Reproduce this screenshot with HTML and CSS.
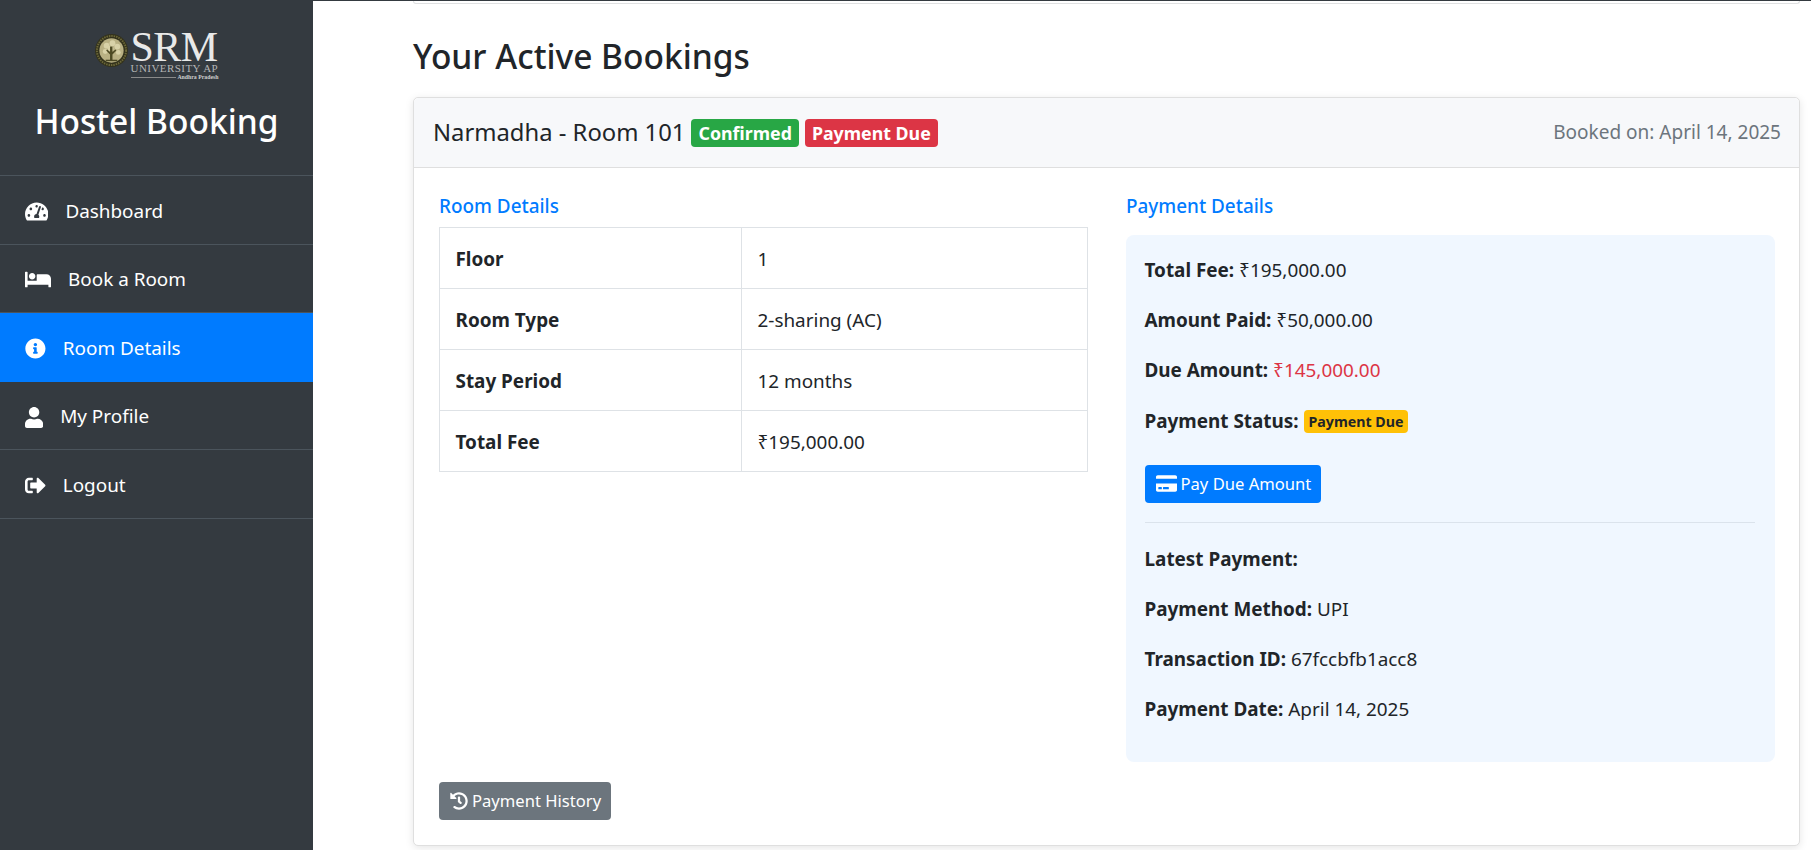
FILE: index.html
```html
<!DOCTYPE html>
<html lang="en">
<head>
<meta charset="utf-8">
<title>Room Details - Hostel Booking</title>
<link rel="stylesheet" href="styles.css">
</head>
<body>
<div class="page">
  <aside class="sidebar">
    <div class="brand">
      <div class="logo">
        <svg class="emblem" viewBox="0 0 34 34" aria-hidden="true">
          <circle cx="17" cy="17" r="17" fill="#33321c"/>
          <circle cx="17" cy="17" r="15" fill="none" stroke="#6b6738" stroke-width="2" stroke-dasharray="1.500 1"/>
          <circle cx="17" cy="17" r="12.500" fill="#b9b184"/>
          <g fill="#d8d2a8">
            <circle cx="12" cy="12" r="3"/><circle cx="18" cy="9.500" r="3"/><circle cx="23" cy="13" r="3"/>
            <circle cx="10.500" cy="18" r="2.500"/><circle cx="24" cy="19" r="2.500"/><circle cx="16" cy="15" r="3"/>
          </g>
          <path d="M15.500 27v-6l-4-4 1-1 3 2.500V13h2.500v5.500l3-2.500 1 1-4 4v6z" fill="#4d4a24"/>
          <path d="M11 26.500h12V28H11z" fill="#4d4a24"/>
        </svg>
        <div class="logo-text">
          <div class="logo-srm">SRM</div>
          <div class="logo-uni">UNIVERSITY AP</div>
          <div class="logo-state"><span class="logo-rule"></span>Andhra Pradesh</div>
        </div>
      </div>
      <h1 class="brand-title">Hostel Booking</h1>
    </div>
    <nav class="menu">
      <a class="menu-item">
        <svg class="ico ico-tach" viewBox="0 0 576 512"><path d="M288 32C128.94 32 0 160.94 0 320c0 52.8 14.25 102.26 39.06 144.8 5.61 9.62 16.3 15.2 27.44 15.2h443c11.14 0 21.83-5.58 27.44-15.2C561.75 422.26 576 372.8 576 320c0-159.06-128.94-288-288-288zm0 64c14.71 0 26.58 10.13 30.32 23.65-1.11 2.26-2.64 4.23-3.45 6.67l-9.22 27.67c-5.13 3.49-10.97 6.01-17.64 6.01-17.67 0-32-14.33-32-32S270.33 96 288 96zM96 384c-17.67 0-32-14.33-32-32s14.33-32 32-32 32 14.33 32 32-14.33 32-32 32zm48-160c-17.67 0-32-14.33-32-32s14.33-32 32-32 32 14.33 32 32-14.33 32-32 32zm246.77-72.41l-61.33 184C343.13 347.33 352 364.54 352 384c0 11.72-3.38 22.55-8.88 32H232.88c-5.5-9.45-8.88-20.28-8.88-32 0-33.94 26.5-61.43 59.9-63.59l61.34-184.01c4.17-12.56 17.73-19.45 30.36-15.17 12.57 4.19 19.35 17.79 15.17 30.36zm14.66 57.2l15.52-46.55c3.47-1.29 7.13-2.23 11.05-2.23 17.67 0 32 14.33 32 32s-14.33 32-32 32c-11.38-.01-20.89-6.28-26.57-15.22zM480 384c-17.67 0-32-14.33-32-32s14.33-32 32-32 32 14.33 32 32-14.33 32-32 32z"/></svg>
        <span>Dashboard</span>
      </a>
      <a class="menu-item">
        <svg class="ico ico-bed" viewBox="0 0 640 512"><path d="M176 256c44.11 0 80-35.89 80-80s-35.89-80-80-80-80 35.89-80 80 35.89 80 80 80zm352-128H304c-8.84 0-16 7.16-16 16v144H64V80c0-8.84-7.16-16-16-16H16C7.16 64 0 71.16 0 80v352c0 8.84 7.160 16 16 16h32c8.840 0 16-7.160 16-16v-48h512v48c0 8.840 7.160 16 16 16h32c8.840 0 16-7.160 16-16V240c0-61.860-50.140-112-112-112z"/></svg>
        <span>Book a Room</span>
      </a>
      <a class="menu-item active">
        <svg class="ico ico-std" viewBox="0 0 512 512"><path d="M256 8C119.043 8 8 119.083 8 256c0 136.997 111.043 248 248 248s248-111.003 248-248C504 119.083 392.957 8 256 8zm0 110c23.196 0 42 18.804 42 42s-18.804 42-42 42-42-18.804-42-42 18.804-42 42-42zm56 254c0 6.627-5.373 12-12 12h-88c-6.627 0-12-5.373-12-12v-24c0-6.627 5.373-12 12-12h12v-64h-12c-6.627 0-12-5.373-12-12v-24c0-6.627 5.373-12 12-12h64c6.627 0 12 5.373 12 12v100h12c6.627 0 12 5.373 12 12v24z"/></svg>
        <span>Room Details</span>
      </a>
      <a class="menu-item">
        <svg class="ico ico-user" viewBox="0 0 448 512"><path d="M224 256c70.7 0 128-57.3 128-128S294.7 0 224 0 96 57.3 96 128s57.3 128 128 128zm89.6 32h-16.7c-22.2 10.2-46.9 16-72.9 16s-50.6-5.8-72.9-16h-16.7C60.2 288 0 348.2 0 422.4V464c0 26.5 21.5 48 48 48h352c26.5 0 48-21.5 48-48v-41.6c0-74.2-60.2-134.4-134.4-134.4z"/></svg>
        <span>My Profile</span>
      </a>
      <a class="menu-item">
        <svg class="ico ico-std" viewBox="0 0 512 512"><path d="M497 273L329 441c-15 15-41 4.5-41-17v-96H152c-13.3 0-24-10.7-24-24v-96c0-13.3 10.7-24 24-24h136V88c0-21.4 25.9-32 41-17l168 168c9.3 9.4 9.3 24.6 0 34zM192 436v-40c0-6.6-5.4-12-12-12H96c-17.7 0-32-14.3-32-32V160c0-17.7 14.3-32 32-32h84c6.6 0 12-5.4 12-12V76c0-6.6-5.400-12-12-12H96c-53 0-96 43-96 96v192c0 53 43 96 96 96h84c6.600 0 12-5.400 12-12z"/></svg>
        <span>Logout</span>
      </a>
    </nav>
  </aside>

  <main class="main">
    <div class="prev-card"></div>
    <h2 class="page-title">Your Active Bookings</h2>
    <section class="card">
      <header class="card-head">
        <div class="card-title">
          <span>Narmadha - Room 101</span>
          <span class="badge badge-green">Confirmed</span>
          <span class="badge badge-red">Payment Due</span>
        </div>
        <span class="booked">Booked on: April 14, 2025</span>
      </header>
      <div class="card-body">
        <div class="columns">
          <div class="col">
            <h3 class="section-title">Room Details</h3>
            <table class="details">
              <tr><th>Floor</th><td>1</td></tr>
              <tr><th>Room Type</th><td>2-sharing (AC)</td></tr>
              <tr><th>Stay Period</th><td>12 months</td></tr>
              <tr><th>Total Fee</th><td>₹195,000.00</td></tr>
            </table>
          </div>
          <div class="col">
            <h3 class="section-title">Payment Details</h3>
            <div class="pay-box">
              <p><strong>Total Fee:</strong> ₹195,000.00</p>
              <p><strong>Amount Paid:</strong> ₹50,000.00</p>
              <p><strong>Due Amount:</strong> <span class="due">₹145,000.00</span></p>
              <p><strong>Payment Status:</strong> <span class="badge-small">Payment Due</span></p>
              <a class="btn btn-blue">
                <svg class="btn-ico-card" viewBox="0 0 576 512"><path d="M0 432c0 26.500 21.500 48 48 48h480c26.500 0 48-21.500 48-48V256H0v176zm192-68c0-6.600 5.400-12 12-12h136c6.600 0 12 5.400 12 12v40c0 6.600-5.400 12-12 12H204c-6.600 0-12-5.400-12-12v-40zm-128 0c0-6.600 5.400-12 12-12h72c6.600 0 12 5.400 12 12v40c0 6.600-5.400 12-12 12H76c-6.600 0-12-5.400-12-12v-40zM576 80v48H0V80c0-26.500 21.500-48 48-48h480c26.500 0 48 21.500 48 48z"/></svg>
                Pay Due Amount
              </a>
              <hr class="divider">
              <p><strong>Latest Payment:</strong></p>
              <p><strong>Payment Method:</strong> UPI</p>
              <p><strong>Transaction ID:</strong> 67fccbfb1acc8</p>
              <p class="last"><strong>Payment Date:</strong> April 14, 2025</p>
            </div>
          </div>
        </div>
        <a class="btn btn-grey">
          <svg class="btn-ico-hist" viewBox="0 0 512 512"><path d="M504 255.531c.253 136.640-111.180 248.372-247.820 248.468-59.015.042-113.223-20.530-155.822-54.911-11.077-8.940-11.905-25.541-1.839-35.607l11.267-11.267c8.609-8.609 22.353-9.551 31.891-1.984C173.062 425.135 212.781 440 256 440c101.705 0 184-82.311 184-184 0-101.705-82.311-184-184-184-48.814 0-93.149 18.969-126.068 49.932l50.754 50.754c10.080 10.080 2.941 27.314-11.313 27.314H24c-8.837 0-16-7.163-16-16V38.627c0-14.254 17.234-21.393 27.314-11.314l49.372 49.372C129.209 34.136 189.552 8 256 8c136.810 0 247.747 110.780 248 247.531zm-180.912 78.784l9.823-12.630c8.138-10.463 6.253-25.542-4.210-33.679L288 256.349V152c0-13.255-10.745-24-24-24h-16c-13.255 0-24 10.745-24 24v135.651l65.409 50.874c10.463 8.137 25.541 6.253 33.679-4.210z"/></svg>
          Payment History
        </a>
      </div>
    </section>
  </main>
</div>
</body>
</html>
```

FILE: styles.css
```css
* { box-sizing: border-box; }
html, body { margin: 0; height: 100%; overflow: hidden; }
body {
  font-family: "Noto Sans", "Open Sans", sans-serif;
  font-size: 18.9px;
  line-height: 27.6px;
  color: #212529;
  background: #fff;
}
.page { display: flex; height: 850px; border-top: 1px solid #343a40; }

/* sidebar */
.sidebar { width: 313px; flex: none; background: #343a40; color: #fff; margin-top: -1px; }
.brand {
  height: 176px;
  padding-top: 32px;
  border-bottom: 1px solid #4b545c;
  display: flex;
  flex-direction: column;
  align-items: center;
}
.logo { display: flex; align-items: flex-start; gap: 3px; height: 51px; }
.emblem { width: 33px; height: 33px; margin-top: 2px; }
.logo-text { font-family: "Liberation Serif", serif; color: #e9e9e9; width: 88px; }
.logo-srm { font-size: 42px; line-height: 30px; height: 31px; letter-spacing: -.5px; white-space: nowrap; }
.logo-uni { font-size: 11px; line-height: 10px; letter-spacing: .45px; color: #b5b5b5; white-space: nowrap; }
.logo-state { font-size: 5.800px; line-height: 9px; font-weight: bold; color: #cfcfcf; display: flex; align-items: center; justify-content: flex-end; white-space: nowrap; }
.logo-rule { flex: 1; height: 1px; background: #8a8a8a; margin-right: 1px; }
.brand-title { margin: 14px 0 0; font-size: 33.500px; line-height: 48px; font-weight: 500; white-space: nowrap; }

.menu-item {
  display: flex;
  align-items: center;
  height: 68.6px;
  padding: 3px 0 0 25px;
  border-bottom: 1px solid #4b545c;
  color: #fff;
}
.menu-item.active { background: #007bff; border-bottom-color: #007bff; }
.ico { fill: #fff; height: 21px; margin-right: 17px; flex: none; }
.ico-tach { width: 23.400px; }
.ico-bed { width: 26px; }
.ico-std { width: 20.800px; }
.ico-user { width: 18.200px; }

/* main */
.main { flex: 1; min-width: 0; padding: 0 11px 0 100px; }
.prev-card { height: 3px; border: 1px solid #dfe0e1; border-top: 0; border-radius: 0 0 4px 4px; }
.page-title { margin: 31px 0 20px; font-size: 33.500px; line-height: 42px; font-weight: 500; }

.card {
  border: 1px solid #dfdfdf;
  border-radius: 5px;
  background: #fff;
  box-shadow: 0 2px 8px rgba(0, 0, 0, .1);
  height: 749px;
}
.card-head {
  height: 70px;
  padding: 0 18px 0 19px;
  display: flex;
  align-items: center;
  justify-content: space-between;
  background: #f7f8fa;
  border-bottom: 1px solid #dfdfdf;
  border-radius: 5px 5px 0 0;
}
.card-title { display: flex; align-items: center; font-size: 23.800px; gap: 6px; }
.badge {
  display: inline-block;
  padding: 0 7px;
  height: 28px;
  line-height: 28px;
  font-size: 17.800px;
  font-weight: 700;
  color: #fff;
  border-radius: 4px;
}
.badge-green { background: #28a745; }
.badge-red { background: #dc3545; }
.booked { color: #6c757d; font-size: 19px; }

.card-body { padding: 25px; }
.columns { display: grid; grid-template-columns: 649px 649px; column-gap: 38px; }
.section-title { margin: 0 0 7px; font-size: 18.900px; line-height: 27px; font-weight: 500; color: #007bff; }
.details { width: 649px; border-collapse: collapse; }
.details th, .details td { border: 1px solid #dee2e6; padding: 18px 15.500px 14.400px; text-align: left; }
.details th { width: 302px; font-weight: 700; }

.pay-box { background: #f0f7ff; border-radius: 8px; padding: 22px 20px 21px 18.500px; height: 527px; margin-top: 15px; }
.pay-box p { margin: 0 0 22.600px; white-space: nowrap; }
.pay-box p.last { margin: 0; }
.due { color: #dc3545; }
.badge-small {
  display: inline-block;
  vertical-align: 1px;
  padding: 0 5px;
  height: 23px;
  line-height: 23px;
  font-size: 14.200px;
  font-weight: 700;
  background: #ffc107;
  border-radius: 4px;
}
.btn {
  display: inline-flex;
  align-items: center;
  height: 38px;
  padding: 0 10px 0 11px;
  color: #fff;
  border-radius: 4px;
  font-size: 16.600px;
  white-space: nowrap;
}
.btn-blue { background: #007bff; margin-top: 7px; }
.btn-grey { background: #6c757d; margin-top: 20px; }
.btn-ico-card { width: 21px; height: 21px; fill: #fff; margin-right: 4px; }
.btn-ico-hist { width: 18px; height: 18px; fill: #fff; margin-right: 4px; }
.divider { border: 0; border-top: 1px solid #dbe3ec; margin: 19px 0 23px; }
```
